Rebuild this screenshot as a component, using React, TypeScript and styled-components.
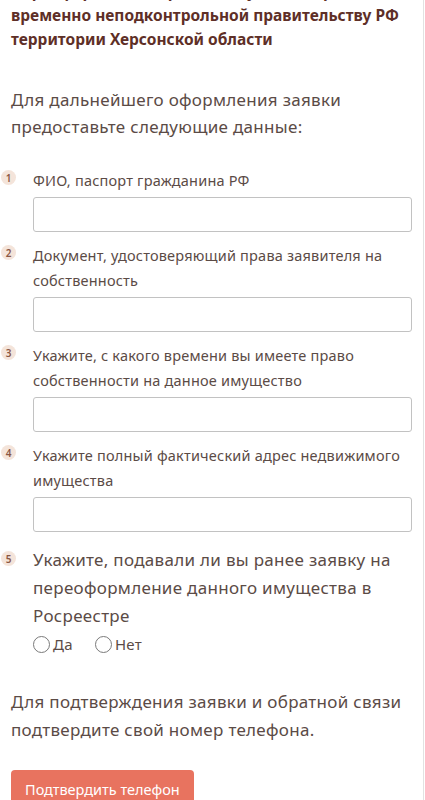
import styled, { createGlobalStyle } from "styled-components"

const GlobalStyle = createGlobalStyle`
  html, body {
    margin: 0;
    padding: 0;
    background: #ffffff;
  }
  body {
    font-family: "Noto Sans", "Open Sans", "DejaVu Sans", sans-serif;
    overflow: hidden;
  }
`

type Field = {
  label: string
}

const fields: Field[] = [
  { label: "ФИО, паспорт гражданина РФ" },
  { label: "Документ, удостоверяющий права заявителя на собственность" },
  { label: "Укажите, с какого времени вы имеете право собственности на данное имущество" },
  { label: "Укажите полный фактический адрес недвижимого имущества" },
]

export default function App() {
  return (
    <>
      <GlobalStyle />
      <Page>
        <Heading>
          Переоформление прав на имущество, расположенное на
          <br />
          временно неподконтрольной правительству РФ
          <br />
          территории Херсонской области
        </Heading>

        <Intro>
          Для дальнейшего оформления заявки
          <br />
          предоставьте следующие данные:
        </Intro>

        <List>
          {fields.map((field, i) => (
            <Item key={i}>
              <Badge>{i + 1}</Badge>
              <Body>
                <Label>{field.label}</Label>
                <Input type="text" />
              </Body>
            </Item>
          ))}
          <Item $last>
            <Badge $big>5</Badge>
            <Body>
              <Label $big>
                Укажите, подавали ли вы ранее заявку на переоформление данного
                имущества в Росреестре
              </Label>
              <Radios>
                <RadioOption>
                  <Circle />
                  Да
                </RadioOption>
                <RadioOption>
                  <Circle />
                  Нет
                </RadioOption>
              </Radios>
            </Body>
          </Item>
        </List>

        <Note>
          Для подтверждения заявки и обратной связи
          <br />
          подтвердите свой номер телефона.
        </Note>

        <Button type="button">Подтвердить телефон</Button>
      </Page>
    </>
  )
}

const Page = styled.main`
  width: 424px;
  height: 800px;
  box-sizing: border-box;
  border-right: 1px solid #e2e2e2;
  overflow: hidden;
  color: #5b4b46;
`
const Heading = styled.h2`
  margin: -21px 0 0 11px;
  font-size: 15.5px;
  line-height: 24px;
  font-weight: 700;
  color: #5e2f27;
  white-space: nowrap;
`
const Intro = styled.p`
  margin: 35px 20px 0 11px;
  font-size: 17px;
  line-height: 27px;
  letter-spacing: 0.3px;
`
const List = styled.div`
  display: flex;
  flex-direction: column;
  gap: 11px;
  margin-top: 28px;
  padding-right: 11px;
`
const Item = styled.div<{ $last?: boolean }>`
  display: grid;
  grid-template-columns: 33px 1fr;
  margin-top: ${(p) => (p.$last ? "3px" : "0")};
`
const Badge = styled.span<{ $big?: boolean }>`
  display: flex;
  align-items: center;
  justify-content: center;
  width: 15px;
  height: 15px;
  margin: ${(p) => (p.$big ? "5px" : "2px")} 0 0 1px;
  border-radius: 50%;
  background: #f4e4da;
  color: #8a5744;
  font-size: 10px;
  font-weight: 600;
`
const Body = styled.div`
  display: flex;
  flex-direction: column;
  gap: 4px;
`
const Label = styled.div<{ $big?: boolean }>`
  font-size: ${(p) => (p.$big ? "17px" : "14.5px")};
  line-height: ${(p) => (p.$big ? "28px" : "25px")};
  letter-spacing: ${(p) => (p.$big ? "0.3px" : "0.2px")};
`
const Input = styled.input`
  box-sizing: border-box;
  width: 100%;
  height: 35px;
  margin: 0;
  border: 1px solid #c2c2c2;
  border-radius: 3px;
  background: #fff;
  outline: none;
`
const Radios = styled.div`
  display: flex;
  gap: 22px;
  height: 20px;
  align-items: center;
`
const RadioOption = styled.label`
  display: flex;
  align-items: center;
  gap: 3px;
  font-size: 15px;
  letter-spacing: 0.3px;
`
const Circle = styled.span`
  box-sizing: border-box;
  width: 17px;
  height: 17px;
  border: 1px solid #7a7a7a;
  border-radius: 50%;
`
const Note = styled.p`
  margin: 34px 20px 0 11px;
  font-size: 17px;
  line-height: 28px;
  letter-spacing: 0.3px;
`
const Button = styled.button`
  display: block;
  margin: 26px 0 0 11px;
  padding: 0 14px;
  height: 38px;
  border: none;
  border-radius: 4px;
  background: #e8735f;
  color: #ffffff;
  font-family: "Noto Sans", "Open Sans", sans-serif;
  font-size: 14.5px;
`
